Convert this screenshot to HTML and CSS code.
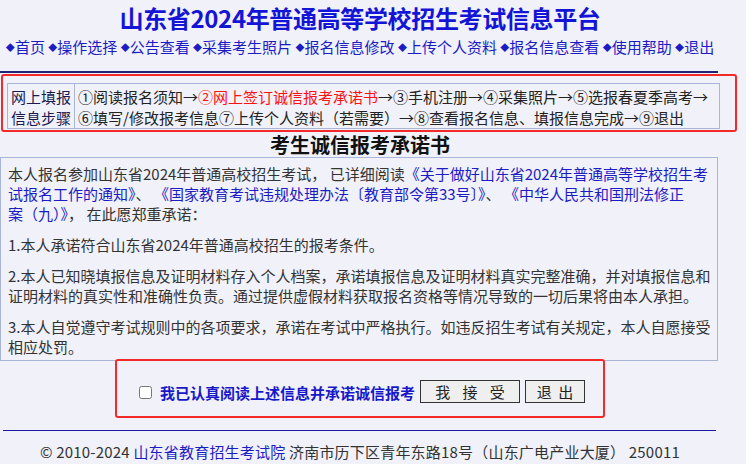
FILE: index.html
```html
<!DOCTYPE html>
<html lang="zh-CN">
<head>
<meta charset="utf-8">
<title>山东省2024年普通高等学校招生考试信息平台</title>
<link rel="stylesheet" href="styles.css">
</head>
<body>
<div class="page">
  <h1 class="title">山东省2024年普通高等学校招生考试信息平台</h1>
  <nav class="nav">
    <a href="#"><span class="dot">◆</span>首页</a>
    <a href="#"><span class="dot">◆</span>操作选择</a>
    <a href="#"><span class="dot">◆</span>公告查看</a>
    <a href="#"><span class="dot">◆</span>采集考生照片</a>
    <a href="#"><span class="dot">◆</span>报名信息修改</a>
    <a href="#"><span class="dot">◆</span>上传个人资料</a>
    <a href="#"><span class="dot">◆</span>报名信息查看</a>
    <a href="#"><span class="dot">◆</span>使用帮助</a>
    <a href="#"><span class="dot">◆</span>退出</a>
  </nav>
  <div class="rule-top"></div>
  <div class="mark mark-steps">
    <table class="steps">
      <tr>
        <td class="steps-head">网上填报<br>信息步骤</td>
        <td class="steps-body">①阅读报名须知→<span class="current">②网上签订诚信报考承诺书</span>→③手机注册→④采集照片→⑤选报春夏季高考→<br>⑥填写/修改报考信息⑦上传个人资料（若需要）→⑧查看报名信息、填报信息完成→⑨退出</td>
      </tr>
    </table>
  </div>
  <h2 class="pledge-title">考生诚信报考承诺书</h2>
  <div class="pledge">
    <p>本人报名参加山东省2024年普通高校招生考试， 已详细阅读<a href="#">《关于做好山东省2024年普通高等学校招生考<br>试报名工作的通知》</a>、 <a href="#">《国家教育考试违规处理办法〔教育部令第33号〕》</a>、 <a href="#">《中华人民共和国刑法修正<br>案（九）》</a>， 在此愿郑重承诺：</p>
    <p>1.本人承诺符合山东省2024年普通高校招生的报考条件。</p>
    <p>2.本人已知晓填报信息及证明材料存入个人档案，承诺填报信息及证明材料真实完整准确，并对填报信息和证明材料的真实性和准确性负责。通过提供虚假材料获取报名资格等情况导致的一切后果将由本人承担。</p>
    <p>3.本人自觉遵守考试规则中的各项要求，承诺在考试中严格执行。如违反招生考试有关规定，本人自愿接受相应处罚。</p>
  </div>
  <div class="mark mark-accept">
    <label class="agree"><input type="checkbox" class="agree-box"><span>我已认真阅读上述信息并承诺诚信报考</span></label>
    <button class="btn btn-accept" type="button">我 接 受</button>
    <button class="btn btn-exit" type="button">退 出</button>
  </div>
  <div class="rule-bottom"></div>
  <footer class="footer">© 2010-2024 <a href="#">山东省教育招生考试院</a> 济南市历下区青年东路18号（山东广电产业大厦） 250011</footer>
</div>
</body>
</html>
```
FILE: styles.css
```css
html, body {
  margin: 0;
  padding: 0;
  background: #f0f1f9;
}
body {
  font-family: "Microsoft YaHei", "Noto Sans CJK SC", "Noto Sans", sans-serif;
  font-size: 15px;
  color: #333;
}
a {
  text-decoration: none;
  color: #1c1cc4;
}
.page {
  width: 720px;
}
.title {
  margin: 0;
  height: 36px;
  line-height: 36px;
  font-size: 24px;
  font-weight: bold;
  letter-spacing: -0.35px;
  color: #1414d6;
  text-align: center;
}
.nav {
  height: 22px;
  line-height: 22px;
  text-align: center;
  white-space: nowrap;
  font-size: 15px;
}
.nav a {
  color: #1c1cc4;
}
.dot {
  font-size: 9px;
  vertical-align: 2px;
}
.rule-top {
  margin-top: 13px;
  height: 2px;
  width: 718px;
  background: #23227a;
}
.mark {
  border: 2px solid #f42a2a;
  border-radius: 3px;
}
.mark-steps {
  box-sizing: border-box;
  width: 736px;
  margin: 1px 0 0 1px;
  padding: 7px 15px 1px 4px;
}
.steps {
  width: 713px;
  border-collapse: collapse;
  font-size: 15px;
}
.steps td {
  border: 1px solid #a9b6d8;
  line-height: 21px;
  padding: 2px 3px 0 3px;
  vertical-align: top;
  white-space: nowrap;
}
.steps-head {
  width: 60px;
  padding-left: 2px;
  color: #1a1a50;
}
.steps-body {
  color: #222;
}
.current {
  color: #ff1010;
}
.pledge-title {
  margin: 0;
  height: 25px;
  line-height: 25px;
  font-size: 20px;
  font-weight: bold;
  text-align: center;
  color: #111;
}
.pledge {
  box-sizing: border-box;
  width: 718px;
  border: 1px solid #a9b6d8;
  padding: 6px 4px 3px 7px;
}
.pledge p {
  margin: 0 0 11px 0;
  line-height: 20px;
}
.pledge p:last-child {
  margin-bottom: 0;
}
.mark-accept {
  display: flex;
  align-items: center;
  width: fit-content;
  margin: -2px auto 0 auto;
  padding: 19px 18px 13px 22px;
  position: relative;
}
.agree {
  display: flex;
  align-items: center;
  gap: 8px;
  font-weight: bold;
  color: #1818c8;
  margin-right: 5px;
  margin-top: 2px;
}
.agree-box {
  margin: 0;
  width: 13px;
  height: 13px;
}
.btn {
  box-sizing: border-box;
  height: 23px;
  padding: 0;
  font-family: inherit;
  font-size: 15px;
  line-height: 21px;
  color: #222;
  background: #efefef;
  border: 1px solid #333;
  border-radius: 0;
}
.btn-accept {
  width: 100px;
  word-spacing: 9px;
}
.btn-exit {
  width: 60px;
  margin-left: 5px;
  word-spacing: 3px;
}
.rule-bottom {
  margin: 12px 0 0 3px;
  width: 713px;
  height: 1px;
  background: #1a1aa0;
}
.footer {
  margin-top: 10px;
  line-height: 22px;
  text-align: center;
  white-space: nowrap;
  font-size: 15px;
  letter-spacing: 0.2px;
}
.footer a {
  color: #1c1cc4;
}
```
